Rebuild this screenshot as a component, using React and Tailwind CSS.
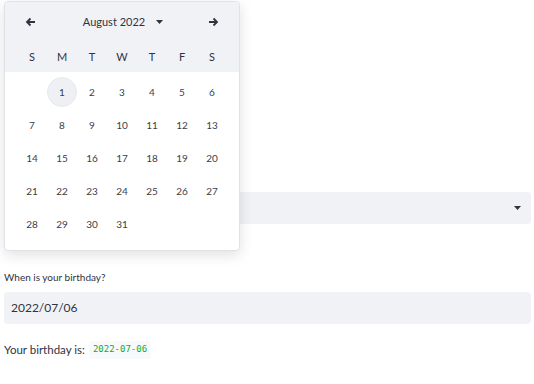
import React from "react";

const weeks = [
  [null, 1, 2, 3, 4, 5, 6],
  [7, 8, 9, 10, 11, 12, 13],
  [14, 15, 16, 17, 18, 19, 20],
  [21, 22, 23, 24, 25, 26, 27],
  [28, 29, 30, 31, null, null, null],
];

function Caret({ className = "" }) {
  return (
    <svg width="7" height="4" viewBox="0 0 7 4" className={className}>
      <path d="M0 0h7L3.5 4z" fill="#31333f" />
    </svg>
  );
}

function Arrow({ dir }) {
  return (
    <svg width="11" height="10" viewBox="0 0 11 10">
      <path
        d={dir === "left" ? "M10 5H2M5.5 1.5 2 5l3.5 3.5" : "M1 5h8M5.5 1.5 9 5 5.5 8.5"}
        stroke="#31333f"
        strokeWidth="1.8"
        fill="none"
      />
    </svg>
  );
}

export default function App() {
  return (
    <div
      className="relative w-[534px] h-[384px] bg-white overflow-hidden text-[#31333f]"
      style={{ fontFamily: "Lato, 'Noto Sans', sans-serif" }}
    >
      {/* page content under the calendar */}
      <div className="pl-[4px] pr-[3px] pt-[192px]">
        <div className="h-[32px] bg-[#f0f2f6] rounded flex items-center justify-end pr-[10px]">
          <Caret />
        </div>
        <div className="mt-[46px] text-[10px] leading-[14px]">When is your birthday?</div>
        <div className="mt-[8px] h-[32px] bg-[#f0f2f6] rounded flex items-center pl-[7px] text-[12px]">
          2022/07/06
        </div>
        <div className="mt-[17px] flex items-center gap-[4px] text-[11.5px]">
          <span>Your birthday is:</span>
          <code
            className="bg-[#f8f9fb] text-[#09ab3b] text-[9px] px-[4px] py-[2px] rounded"
            style={{ fontFamily: "'DejaVu Sans Mono', monospace" }}
          >
            2022-07-06
          </code>
        </div>
      </div>

      {/* calendar popover */}
      <div className="absolute left-[4px] top-[1px] w-[236px] bg-white border border-[#e0e2e8] rounded shadow-[0_4px_14px_rgba(0,0,0,0.12)] overflow-hidden">
        <div className="bg-[#f0f2f6] h-[70px] px-[12px]">
          <div className="h-[40px] flex items-center justify-between px-[8px]">
            <Arrow dir="left" />
            <div className="flex items-center gap-[11px] ml-[2px] text-[11px]">
              <span>August 2022</span>
              <Caret />
            </div>
            <Arrow dir="right" />
          </div>
          <div className="grid grid-cols-7 text-[11px] text-center">
            {["S", "M", "T", "W", "T", "F", "S"].map((d, i) => (
              <div key={i} className="h-[30px] flex items-center justify-center">
                {d}
              </div>
            ))}
          </div>
        </div>
        <div className="px-[12px] pt-[5px] pb-[11px] flex flex-col gap-[3px]">
          {weeks.map((w, i) => (
            <div key={i} className="grid grid-cols-7">
              {w.map((d, j) => (
                <div key={j} className="h-[30px] flex items-center justify-center">
                  {d && (
                    <span
                      className={`w-[30px] h-[30px] rounded-full flex items-center justify-center text-[10px] text-[#3b3d4a] ${
                        d === 1 ? "bg-[#eef0f4] border border-[#e6e8ed]" : ""
                      }`}
                    >
                      {d}
                    </span>
                  )}
                </div>
              ))}
            </div>
          ))}
        </div>
      </div>
    </div>
  );
}
